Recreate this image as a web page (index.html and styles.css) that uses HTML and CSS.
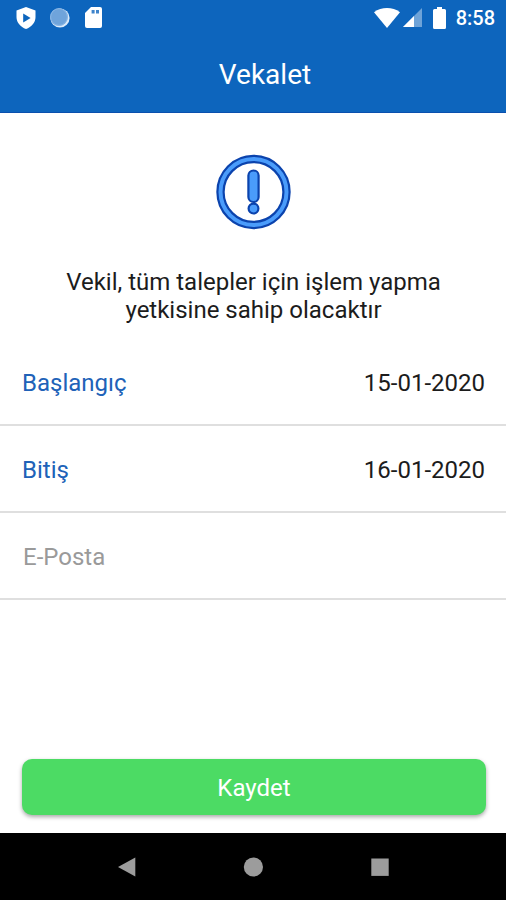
FILE: index.html
```
<!DOCTYPE html>
<html lang="tr">

<head>
    <meta charset="UTF-8">
    <meta name="viewport" content="width=device-width, initial-scale=1.0">
    <title>Vekalet</title>

    <link rel="stylesheet" href="styles.css">
</head>

<body>
    <header class="header">
        <div class="status-bar">
            <div class="status-left">
                <svg width="20" height="22" viewBox="0 0 20 22">
                    <path d="M10 0 L19.5 3.5 V10 C19.5 15.5 15.5 20 10 22 C4.5 20 0.5 15.5 0.5 10 V3.5 Z" fill="#fff" />
                    <path d="M7.2 6.5 L14.6 11 L7.2 15.5 Z" fill="#0d65bd" />
                </svg>
                <svg width="20" height="20" viewBox="0 0 20 20">
                    <circle cx="10" cy="10" r="9.6" fill="#dcebfa" />
                    <circle cx="9" cy="9" r="8.8" fill="#6fa4db" />
                    <circle cx="9" cy="9" r="8.4" fill="none" stroke="#8bb7e5" stroke-width="1" />
                </svg>
                <svg class="sd-icon" width="17" height="21" viewBox="0 0 17 21">
                    <path d="M6 0 H15 Q17 0 17 2 V19 Q17 21 15 21 H2 Q0 21 0 19 V6 Z" fill="#fff" />
                    <path d="M6.6 3 H9.6 V6.4 H6.6 Z M11 3 H14 V6.4 H11 Z" fill="#3f84cb" />
                </svg>
            </div>
            <div class="status-right">
                <svg width="26" height="20" viewBox="0 0 26 20">
                    <path d="M13 20 L0 4.2 C7.5 -1.4 18.5 -1.4 26 4.2 Z" fill="#fff" />
                </svg>
                <svg class="signal-icon" width="19" height="19" viewBox="0 0 19 19">
                    <path d="M19 0 V19 H0 Z" fill="#6ea3d8" />
                    <path d="M11 8 V19 H0 Z" fill="#fff" />
                </svg>
                <svg class="battery-icon" width="13" height="22" viewBox="0 0 13 22">
                    <path d="M4 0 H9 V2 H11.5 Q13 2 13 3.5 V20.5 Q13 22 11.5 22 H1.5 Q0 22 0 20.5 V3.5 Q0 2 1.5 2 H4 Z" fill="#fff" />
                </svg>
                <span class="clock">8:58</span>
            </div>
        </div>
        <h1 class="title">Vekalet</h1>
    </header>

    <main class="content">
        <svg class="info-icon" width="76" height="76" viewBox="0 0 76 76">
            <circle cx="38.5" cy="38" r="33" fill="none" stroke="#0b43ad" stroke-width="8.4" />
            <circle cx="38.5" cy="38" r="33" fill="none" stroke="#4a9cfb" stroke-width="4" />
            <rect x="33.4" y="16.5" width="10.2" height="31.5" rx="5.1" fill="#4a9cfb" stroke="#0b43ad" stroke-width="2.2" />
            <circle cx="38.5" cy="54.6" r="4.9" fill="#4a9cfb" stroke="#0b43ad" stroke-width="2.2" />
        </svg>
        <p class="info-text">Vekil, tüm talepler için işlem yapma<br>yetkisine sahip olacaktır</p>

        <form class="form" action="#" method="post">
            <div class="row">
                <span class="label">Başlangıç</span>
                <span class="date">15-01-2020</span>
            </div>
            <div class="row">
                <span class="label">Bitiş</span>
                <span class="date">16-01-2020</span>
            </div>
            <div class="row">
                <input class="email" type="text" placeholder="E-Posta">
            </div>
            <button class="submit" type="submit">Kaydet</button>
        </form>
    </main>

    <nav class="nav-bar">
        <svg width="20" height="20" viewBox="0 0 20 20">
            <path d="M2 10 L19.3 0.5 V19.5 Z" fill="#9c9c9c" />
        </svg>
        <svg width="20" height="20" viewBox="0 0 20 20">
            <circle cx="10.4" cy="10" r="9.6" fill="#9c9c9c" />
        </svg>
        <svg width="20" height="20" viewBox="0 0 20 20">
            <rect x="1.3" y="1.5" width="17.4" height="17.4" fill="#9c9c9c" />
        </svg>
    </nav>
</body>

</html>
```

FILE: styles.css
```
* {
    box-sizing: border-box;
    padding: 0;
    margin: 0;
    font-family: Roboto, sans-serif;
}

body {
    height: 100vh;
    display: flex;
    flex-direction: column;
    overflow: hidden;
    background-color: #fff;
    color: #1c1c1c;
}

svg {
    display: block;
    flex-shrink: 0;
}

.header {
    height: 113px;
    background-color: #0d65bd;
    border-bottom: 1px solid #0a50ae;
    color: #fff;
}

.status-bar {
    height: 35px;
    padding: 0 11px 0 16px;
    display: flex;
    align-items: center;
    justify-content: space-between;
}

.status-left,
.status-right {
    display: flex;
    align-items: center;
}

.status-left {
    gap: 14px;
}

.sd-icon {
    margin-left: 1px;
}

.signal-icon {
    margin-left: 3px;
}

.battery-icon {
    margin-left: 11px;
}

.clock {
    margin-left: 10px;
    padding-top: 1px;
    font-size: 20px;
    font-weight: 500;
}

.title {
    padding-left: 24px;
    line-height: 79px;
    font-size: 28px;
    font-weight: 400;
    text-align: center;
}

.content {
    flex: 1;
    display: flex;
    flex-direction: column;
    align-items: center;
}

.info-icon {
    margin-top: 41px;
}

.info-text {
    margin-top: 38px;
    padding-left: 1px;
    font-size: 24px;
    line-height: 28px;
    text-align: center;
}

.form {
    flex: 1;
    width: 100%;
    margin-top: 15px;
    display: flex;
    flex-direction: column;
}

.row {
    height: 87px;
    padding: 2px 21px 0 22px;
    display: flex;
    align-items: center;
    justify-content: space-between;
    border-bottom: 2px solid #dfdfdf;
    font-size: 24px;
}

.label {
    color: #2062b8;
}

.email {
    width: 100%;
    padding-left: 1px;
    border: none;
    outline: none;
    background: none;
    font-size: 24px;
}

.email::placeholder {
    color: #9a9a9a;
}

.submit {
    height: 56px;
    margin: auto 20px 18px 22px;
    padding-top: 2px;
    border: none;
    border-radius: 10px;
    background-color: #4cdb64;
    box-shadow: 0 2px 4px rgba(0, 0, 0, 0.35);
    color: #fff;
    font-size: 24px;
}

.nav-bar {
    height: 67px;
    padding: 0 116px;
    display: flex;
    align-items: center;
    justify-content: space-between;
    background-color: #000;
}
```
